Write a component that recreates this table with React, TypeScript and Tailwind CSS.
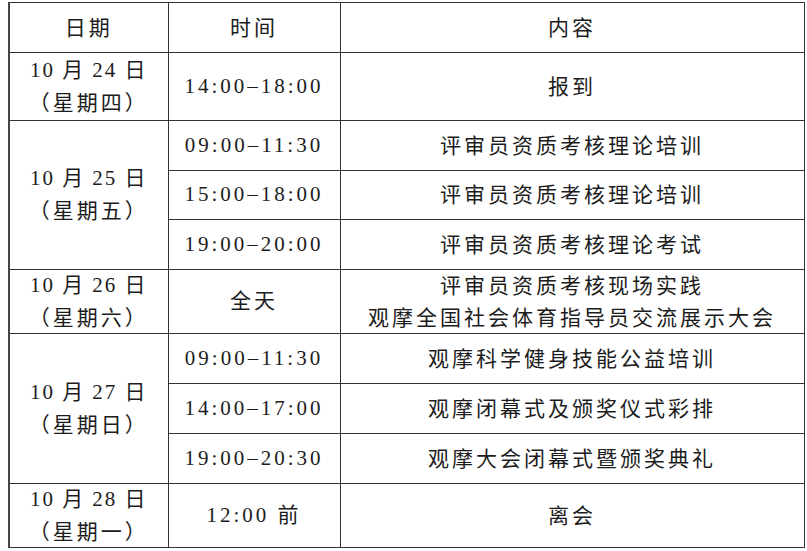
const rows: { date?: [string, string]; span?: number; h: number; time: string; content: string[] }[] = [
  { date: ["10 月 24 日", "（星期四）"], span: 1, h: 68, time: "14:00–18:00", content: ["报到"] },
  { date: ["10 月 25 日", "（星期五）"], span: 3, h: 50, time: "09:00–11:30", content: ["评审员资质考核理论培训"] },
  { h: 49, time: "15:00–18:00", content: ["评审员资质考核理论培训"] },
  { h: 50, time: "19:00–20:00", content: ["评审员资质考核理论考试"] },
  { date: ["10 月 26 日", "（星期六）"], span: 1, h: 64, time: "全天", content: ["评审员资质考核现场实践", "观摩全国社会体育指导员交流展示大会"] },
  { date: ["10 月 27 日", "（星期日）"], span: 3, h: 50, time: "09:00–11:30", content: ["观摩科学健身技能公益培训"] },
  { h: 50, time: "14:00–17:00", content: ["观摩闭幕式及颁奖仪式彩排"] },
  { h: 50, time: "19:00–20:30", content: ["观摩大会闭幕式暨颁奖典礼"] },
  { date: ["10 月 28 日", "（星期一）"], span: 1, h: 64, time: "12:00 前", content: ["离会"] },
];

const cell = "border border-[#333] text-center align-middle p-0";

export default function App() {
  return (
    <div className="w-[807px] h-[551px] bg-white pt-[2px] pl-[8px] text-[#1c1c1c] font-[family-name:'Liberation_Serif','Noto_Sans_CJK_SC',serif] text-[21px] tracking-[3px]">
      <table className="border-collapse w-[795px] table-fixed border-l-2 border-l-[#444]">
        <colgroup>
          <col className="w-[159px]" />
          <col className="w-[172px]" />
          <col className="w-[464px]" />
        </colgroup>
        <tbody>
          <tr className="h-[50px]">
            <td className={cell + " pt-[3px]"}>日期</td>
            <td className={cell + " pt-[3px]"}>时间</td>
            <td className={cell + " pt-[3px]"}>内容</td>
          </tr>
          {rows.map((r, i) => (
            <tr key={i} style={{ height: r.h }}>
              {r.date && (
                <td className={cell} rowSpan={r.span}>
                  <div className="leading-[33px] -my-[2px]">
                    <div className="tracking-[2px]">{r.date[0]}</div>
                    <div>{r.date[1]}</div>
                  </div>
                </td>
              )}
              <td className={cell}>{r.time}</td>
              <td className={cell}>
                <div className="leading-[32px] -my-[1px]">
                  {r.content.map((c) => (
                    <div key={c}>{c}</div>
                  ))}
                </div>
              </td>
            </tr>
          ))}
        </tbody>
      </table>
    </div>
  );
}
